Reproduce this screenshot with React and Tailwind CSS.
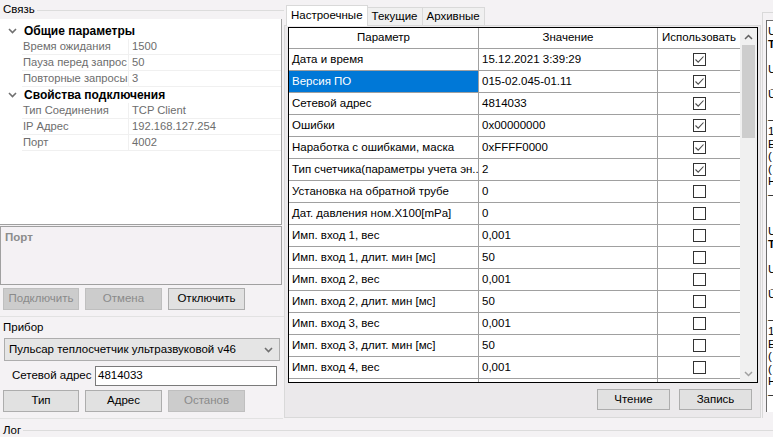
import React from 'react';

const font = { fontFamily: '"Liberation Sans", Arial, sans-serif' };

const propGroups = [
  {
    title: 'Общие параметры',
    items: [
      ['Время ожидания', '1500'],
      ['Пауза перед запрос', '50'],
      ['Повторные запросы', '3'],
    ],
  },
  {
    title: 'Свойства подключения',
    items: [
      ['Тип Соединения', 'TCP Client'],
      ['IP Адрес', '192.168.127.254'],
      ['Порт', '4002'],
    ],
  },
];

const rows = [
  ['Дата и время', '15.12.2021 3:39:29', true],
  ['Версия ПО', '015-02.045-01.11', true],
  ['Сетевой адрес', '4814033', true],
  ['Ошибки', '0x00000000', true],
  ['Наработка с ошибками, маска', '0xFFFF0000', true],
  ['Тип счетчика(параметры учета эн...', '2', true],
  ['Установка на обратной трубе', '0', false],
  ['Дат. давления ном.X100[mPa]', '0', false],
  ['Имп. вход 1, вес', '0,001', false],
  ['Имп. вход 1, длит. мин [мс]', '50', false],
  ['Имп. вход 2, вес', '0,001', false],
  ['Имп. вход 2, длит. мин [мс]', '50', false],
  ['Имп. вход 3, вес', '0,001', false],
  ['Имп. вход 3, длит. мин [мс]', '50', false],
  ['Имп. вход 4, вес', '0,001', false],
  ['', '', false],
];

const Chevron = () => (
  <svg width="9" height="6" viewBox="0 0 9 6" className="text-[#707070]">
    <path d="M1 1 L4.5 4.5 L8 1" fill="none" stroke="currentColor" strokeWidth="1.6" />
  </svg>
);

const Checkbox = ({ checked }) => (
  <div className="w-[13px] h-[13px] border border-[#333] bg-white flex items-center justify-center">
    {checked && (
      <svg width="11" height="11" viewBox="0 0 11 11">
        <path d="M1.5 5.5 L4.2 8.2 L9.5 2.5" fill="none" stroke="#4a4a4a" strokeWidth="1.1" />
      </svg>
    )}
  </div>
);

const Btn = ({ children, disabled, className = '' }) => (
  <div
    className={
      'h-[22px] flex items-center justify-center border ' +
      (disabled ? 'bg-[#cccccc] border-[#bfbfbf] text-[#8a8a8a] ' : 'bg-[#e1e1e1] border-[#adadad] text-black ') +
      className
    }
  >
    {children}
  </div>
);

const GroupLabel = ({ children }) => (
  <div className="flex items-center h-[18px]">
    <span className="pl-[3px] pr-[2px] text-black">{children}</span>
    <div className="flex-1 border-t border-[#dcdcdc]" />
  </div>
);

const LeftPanel = () => (
  <div className="w-[284px] flex flex-col shrink-0">
    <div className="pt-[1px]">
      <GroupLabel>Связь</GroupLabel>
    </div>
    {/* property grid */}
    <div className="h-[208px] w-[282px] bg-white border-r border-b border-[#a0a0a0] pt-[4px]">
      {propGroups.map((g) => (
        <div key={g.title}>
          <div className="h-[16px] flex items-center">
            <div className="w-[22px] flex justify-center pl-[2px]">
              <Chevron />
            </div>
            <span className="font-bold text-black pl-[2px] text-[12px]">{g.title}</span>
          </div>
          {g.items.map(([k, v]) => (
            <div key={k} className="h-[16px] flex items-center text-[#6d6d6d] text-[11.2px]">
              <div className="w-[22px] h-full" />
              <div className="w-[107px] h-full flex items-center pl-[1px] border-r border-b border-[#f0f0f0] overflow-hidden whitespace-nowrap">
                {k}
              </div>
              <div className="flex-1 h-full flex items-center pl-[3px] border-b border-[#f0f0f0]">{v}</div>
            </div>
          ))}
        </div>
      ))}
    </div>
    {/* description */}
    <div className="mt-[1px] h-[59px] w-[282px] bg-[#f4f1f4] border border-[#a0a0a0] pl-[4px] pt-[2px]">
      <span className="font-bold text-[#8c8c8c]">Порт</span>
    </div>
    <div className="flex gap-[6px] pl-[3px] mt-[3px]">
      <Btn disabled className="w-[76px]">Подключить</Btn>
      <Btn disabled className="w-[77px]">Отмена</Btn>
      <Btn className="w-[77px]">Отключить</Btn>
    </div>
    {/* Прибор group */}
    <div className="mt-[6px] border-t border-[#e2e2e2] pt-[3px]">
      <div className="h-[16px] flex items-center pl-[3px]">Прибор</div>
      <div className="mx-[4px] mt-[2px] h-[23px] flex items-center justify-between bg-[#e5e5e5] border border-[#adadad] pl-[4px] pr-[6px]">
        <span>Пульсар теплосчетчик ультразвуковой v46</span>
        <Chevron />
      </div>
      <div className="flex items-center mt-[5px] h-[20px]">
        <span className="pl-[12px] w-[95px] whitespace-nowrap">Сетевой адрес</span>
        <div className="w-[182px] h-[20px] bg-white border border-[#7a7a7a] flex items-center pl-[2px]">4814033</div>
      </div>
      <div className="flex gap-[6px] pl-[3px] mt-[4px]">
        <Btn className="w-[76px]">Тип</Btn>
        <Btn className="w-[77px]">Адрес</Btn>
        <Btn disabled className="w-[77px]">Останов</Btn>
      </div>
      <div className="h-[7px] border-b border-[#e2e2e2] mr-[1px]" />
    </div>
  </div>
);

const Grid = () => (
  <div className="h-[356px] border border-black bg-white flex overflow-hidden">
    <div className="flex-1 overflow-hidden">
      <div className="flex h-[21px] border-b border-[#a0a0a0]">
        <div className="w-[190px] border-r border-[#a0a0a0] flex items-center justify-center">Параметр</div>
        <div className="w-[179px] border-r border-[#a0a0a0] flex items-center justify-center">Значение</div>
        <div className="flex-1 flex items-center justify-center">Использовать</div>
      </div>
      {rows.map(([p, v, c], i) => (
        <div key={i} className="flex h-[22px] border-b border-[#a0a0a0]">
          <div
            className={
              'w-[190px] border-r border-[#a0a0a0] flex items-center pl-[3px] whitespace-nowrap overflow-hidden ' +
              (i === 1 ? 'bg-[#0078d7] text-white' : '')
            }
          >
            {p}
          </div>
          <div className="w-[179px] border-r border-[#a0a0a0] flex items-center pl-[3px]">{v}</div>
          <div className="flex-1 flex items-center justify-center">{p && <Checkbox checked={c} />}</div>
        </div>
      ))}
    </div>
    {/* scrollbar */}
    <div className="w-[17px] bg-[#f0f0f0] flex flex-col items-center">
      <div className="h-[17px] flex items-center justify-center">
        <svg width="9" height="6" viewBox="0 0 9 6">
          <path d="M1 5 L4.5 1.5 L8 5" fill="none" stroke="#606060" strokeWidth="1.5" />
        </svg>
      </div>
      <div className="w-[13px] h-[93px] bg-[#cdcdcd]" />
      <div className="flex-1" />
      <div className="h-[17px] flex items-center justify-center">
        <svg width="9" height="6" viewBox="0 0 9 6">
          <path d="M1 1 L4.5 4.5 L8 1" fill="none" stroke="#a0a0a0" strokeWidth="1.5" />
        </svg>
      </div>
    </div>
  </div>
);

const sliver = [
  ['U', 0], ['T', 1], ['', 0], ['U', 0], ['', 0], ['Ū', 0], ['', 0], ['—', 0], ['1', 0], ['E', 0], ['(', 0], ['(', 0], ['H', 0], ['—', 0],
  ['', 0], ['', 0], ['U', 0], ['T', 1], ['', 0], ['U', 0], ['', 0], ['Ū', 0], ['', 0], ['—', 0], ['1', 0], ['E', 0], ['(', 0], ['(', 0], ['H', 0], ['—', 0],
];

const RightPanel = () => (
  <div className="flex-1 flex">
    <div className="w-[477px] flex flex-col">
      {/* tabs */}
      <div className="h-[20px] flex items-end pl-[2px] mt-[5px]">
        <div className="h-[21px] px-[4px] bg-white border border-b-0 border-[#d9d9d9] flex items-center relative top-[1px]">
          Настроечные
        </div>
        <div className="h-[18px] px-[4px] bg-[#f0f0f0] border-t border-r border-[#d9d9d9] flex items-center">Текущие</div>
        <div className="h-[18px] px-[4px] bg-[#f0f0f0] border-t border-r border-[#d9d9d9] flex items-center">Архивные</div>
      </div>
      <div className="h-[393px] border border-[#d9d9d9] bg-[#ebe9eb] pt-[1px] pl-[3px] pr-[2px] flex flex-col">
        <Grid />
        <div className="flex justify-end gap-[9px] pr-[6px] mt-[6px]">
          <Btn className="w-[73px] !h-[21px]">Чтение</Btn>
          <Btn className="w-[73px] !h-[21px]">Запись</Btn>
        </div>
      </div>
    </div>
    <div className="flex-1 pt-[12px] pl-[1px]">
      <div className="h-[406px] border-l border-t border-[#d9d9d9] pl-[3px] pt-[7px]">
        <div className="h-[392px] border-l border-t border-[#6d6d6d] bg-white overflow-hidden pl-[1px] pt-[4px] leading-[12.5px]">
          {sliver.map(([t, b], i) => (
            <div key={i} className={'h-[12.5px] ' + (b ? 'font-bold' : '')}>
              {t}
            </div>
          ))}
        </div>
      </div>
    </div>
  </div>
);

export default function App() {
  return (
    <div className="w-[773px] h-[437px] bg-[#f4f2f4] overflow-hidden text-[11.5px] text-black flex flex-col" style={font}>
      <div className="h-[419px] flex">
        <LeftPanel />
        <RightPanel />
      </div>
      <div className="flex items-center h-[18px] mt-[3px]">
        <span className="pl-[3px] pr-[2px]">Лог</span>
        <div className="flex-1 border-t border-[#dcdcdc]" />
      </div>
    </div>
  );
}
